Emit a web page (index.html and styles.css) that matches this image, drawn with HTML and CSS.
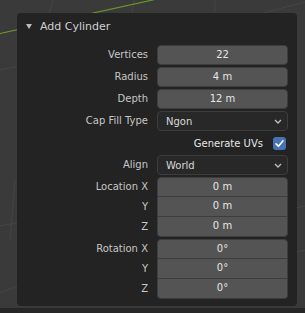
FILE: index.html
```html
<!DOCTYPE html>
<html>
<head>
<meta charset="utf-8">
<link rel="stylesheet" href="styles.css">
</head>
<body>
<div class="viewport">
  <svg class="grid" width="305" height="308" viewBox="0 0 305 308">
    <rect width="305" height="308" fill="#3a3a3a"/>
    <g stroke="#454545" stroke-width="1" fill="none">
      <line x1="53" y1="0" x2="47" y2="20"/>
      <line x1="134" y1="0" x2="131" y2="20"/>
      <line x1="215" y1="0" x2="215" y2="20"/>
      <line x1="260" y1="14" x2="305" y2="2"/>
      <line x1="0" y1="70" x2="20" y2="66"/>
      <line x1="15" y1="180" x2="10" y2="240"/>
      <line x1="0" y1="226" x2="20" y2="222"/>
      <line x1="0" y1="293" x2="20" y2="285"/>
      <line x1="296" y1="208" x2="305" y2="206"/>
      <line x1="296" y1="252" x2="305" y2="250"/>
    </g>
    <line x1="0" y1="33.5" x2="155" y2="-0.5" stroke="#6f9a2a" stroke-width="1.2"/>
  </svg>
  <section class="panel">
    <div class="panel-header"><span class="caret"></span><span class="title">Add Cylinder</span></div>
    <div class="props">
      <div class="lbl">Vertices</div><div class="num">22</div>
      <div class="lbl">Radius</div><div class="num">4 m</div>
      <div class="lbl">Depth</div><div class="num">12 m</div>
      <div class="lbl">Cap Fill Type</div>
      <div class="menu"><span>Ngon</span><svg class="chev" width="8" height="5" viewBox="0 0 8 5"><polyline points="1,1 4,4 7,1" fill="none" stroke="#bdbdbd" stroke-width="1.4"/></svg></div>
      <div class="lbl"></div>
      <div class="check-row"><span>Generate UVs</span><span class="checkbox"><svg width="13" height="13" viewBox="0 0 13 13"><polyline points="3,6.8 5.5,9.2 10,3.8" fill="none" stroke="#ffffff" stroke-width="1.6" stroke-linecap="round" stroke-linejoin="round"/></svg></span></div>
      <div class="lbl">Align</div>
      <div class="menu"><span>World</span><svg class="chev" width="8" height="5" viewBox="0 0 8 5"><polyline points="1,1 4,4 7,1" fill="none" stroke="#bdbdbd" stroke-width="1.4"/></svg></div>
      <div class="lbl-stack"><div class="lbl">Location X</div><div class="lbl">Y</div><div class="lbl">Z</div></div>
      <div class="stack"><div class="num">0 m</div><div class="num">0 m</div><div class="num">0 m</div></div>
      <div class="lbl-stack"><div class="lbl">Rotation X</div><div class="lbl">Y</div><div class="lbl">Z</div></div>
      <div class="stack"><div class="num">0°</div><div class="num">0°</div><div class="num">0°</div></div>
    </div>
  </section>
</div>
<div class="footer"></div>
</body>
</html>
```
FILE: styles.css
```css
html, body {
  margin: 0;
  padding: 0;
  background: #3a3a3a;
}
body {
  width: 305px;
  height: 313px;
  overflow: hidden;
  font-family: "DejaVu Sans", sans-serif;
}
.viewport {
  position: relative;
  height: 308px;
  box-sizing: border-box;
  padding: 13px 8px 0 17px;
}
.grid {
  position: absolute;
  left: 0;
  top: 0;
}
.panel {
  position: relative;
  width: 280px;
  height: 293px;
  box-sizing: border-box;
  background: #232323;
  border-radius: 4px;
}
.panel-header {
  height: 26px;
  display: flex;
  align-items: center;
  padding-left: 9px;
  color: #d0d0d0;
  font-size: 11px;
}
.caret {
  width: 0;
  height: 0;
  border-left: 3px solid transparent;
  border-right: 3px solid transparent;
  border-top: 5px solid #bcbcbc;
  margin-right: 8px;
  margin-top: 1px;
}
.props {
  display: grid;
  grid-template-columns: 1fr 131px;
  column-gap: 9px;
  row-gap: 2px;
  padding: 6px 9px 8px 9px;
  font-size: 10px;
}
.lbl {
  height: 20px;
  line-height: 20px;
  text-align: right;
  color: #c6c6c6;
  white-space: nowrap;
}
.lbl-stack {
  display: flex;
  flex-direction: column;
}
.num {
  height: 20px;
  box-sizing: border-box;
  line-height: 18px;
  text-align: center;
  color: #e6e6e6;
  background: #545454;
  border: 1px solid #3d3d3d;
  border-radius: 4px;
}
.stack {
  display: flex;
  flex-direction: column;
}
.stack .num {
  border-radius: 0;
  border-top-width: 0;
}
.stack .num:first-child {
  border-top-width: 1px;
  border-radius: 4px 4px 0 0;
}
.stack .num:last-child {
  border-radius: 0 0 4px 4px;
}
.menu {
  height: 20px;
  box-sizing: border-box;
  display: flex;
  align-items: center;
  justify-content: space-between;
  padding: 0 5px 0 8px;
  color: #d9d9d9;
  background: #282828;
  border: 1px solid #3d3d3d;
  border-radius: 4px;
}
.chev {
  display: block;
}
.check-row {
  height: 20px;
  display: flex;
  align-items: center;
  justify-content: flex-end;
  gap: 10px;
  padding-right: 2px;
  color: #e6e6e6;
}
.checkbox {
  width: 13px;
  height: 13px;
  background: #4772b3;
  border-radius: 3px;
  display: flex;
}
.footer {
  height: 5px;
  background: #262626;
}
```
